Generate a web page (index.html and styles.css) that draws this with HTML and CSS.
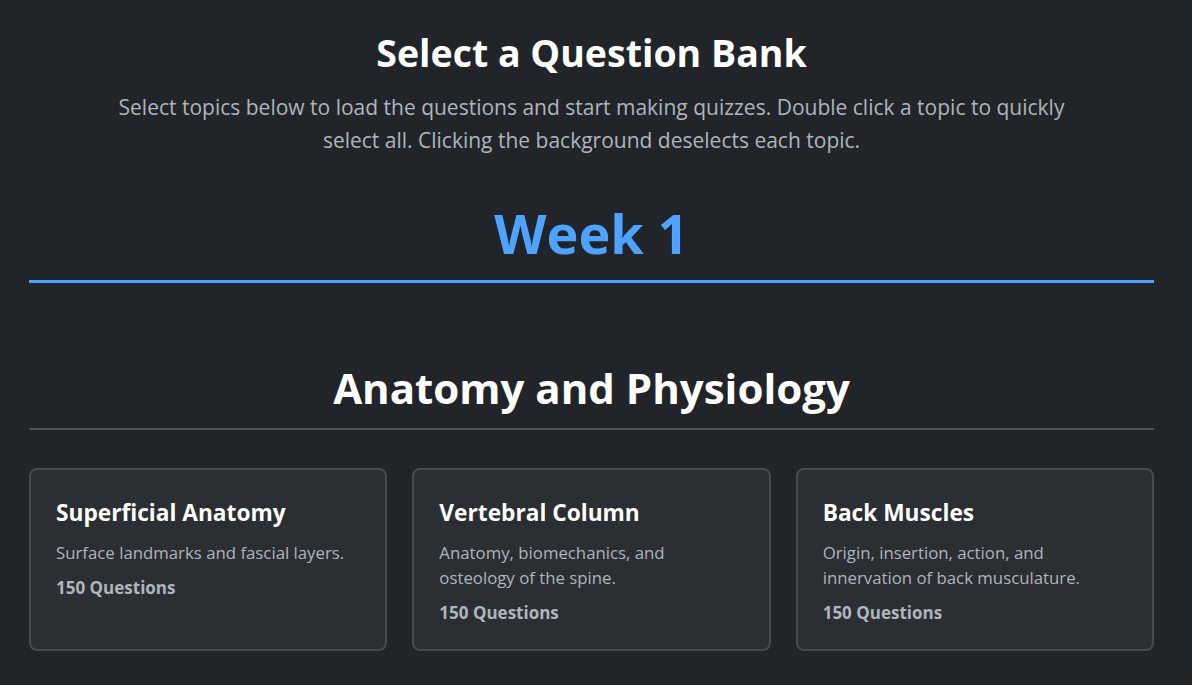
FILE: index.html
```html
<!DOCTYPE html>
<html lang="en">
<head>
<meta charset="utf-8">
<title>Select a Question Bank</title>
<link rel="stylesheet" href="styles.css">
</head>
<body>
<main class="page">
  <header class="intro">
    <h1 class="intro-title">Select a Question Bank</h1>
    <p class="intro-text">Select topics below to load the questions and start making quizzes. Double click a topic to quickly select all. Clicking the background deselects each topic.</p>
  </header>

  <section class="week">
    <h2 class="week-title">Week 1</h2>

    <div class="subject">
      <h3 class="subject-title">Anatomy and Physiology</h3>
      <div class="topic-grid">
        <div class="topic-card">
          <h4 class="topic-name">Superficial Anatomy</h4>
          <p class="topic-desc">Surface landmarks and fascial layers.</p>
          <p class="topic-count">150 Questions</p>
        </div>
        <div class="topic-card">
          <h4 class="topic-name">Vertebral Column</h4>
          <p class="topic-desc">Anatomy, biomechanics, and osteology of the spine.</p>
          <p class="topic-count">150 Questions</p>
        </div>
        <div class="topic-card">
          <h4 class="topic-name">Back Muscles</h4>
          <p class="topic-desc">Origin, insertion, action, and innervation of back musculature.</p>
          <p class="topic-count">150 Questions</p>
        </div>
      </div>
    </div>
  </section>
</main>
</body>
</html>
```

FILE: styles.css
```css
html, body {
  margin: 0;
  padding: 0;
  background: #212529;
}

body {
  font-family: "Open Sans", "Noto Sans", sans-serif;
  color: #f8f9fa;
}

.page {
  padding: 30px 38px 0 29px;
}

.intro {
  text-align: center;
}

.intro-title {
  margin: 0;
  font-size: 37.5px;
  font-weight: 700;
  line-height: 1.2;
  color: #ffffff;
}

.intro-text {
  margin: 16px auto 0;
  max-width: 955px;
  font-size: 21px;
  line-height: 33px;
  color: #adb5bd;
}

.week {
  margin-top: 44px;
}

.week-title {
  margin: 0;
  text-align: center;
  font-size: 54px;
  font-weight: 700;
  line-height: 1.2;
  color: #4da3ff;
  padding-bottom: 14px;
  border-bottom: 3px solid #4da3ff;
}

.subject {
  margin-top: 80px;
}

.subject-title {
  margin: 0;
  text-align: center;
  font-size: 42px;
  font-weight: 700;
  line-height: 1.2;
  color: #ffffff;
  padding-bottom: 15px;
  border-bottom: 2px solid #4b5057;
}

.topic-grid {
  margin-top: 38px;
  display: grid;
  grid-template-columns: repeat(3, 1fr);
  gap: 25px;
}

.topic-card {
  background: #2b2e33;
  border: 2px solid #464b52;
  border-radius: 8px;
  padding: 28px 26px 24px 25px;
}

.topic-name {
  margin: 0;
  font-size: 22.7px;
  font-weight: 700;
  line-height: 1.3;
  color: #ffffff;
}

.topic-desc {
  margin: 12px 0 0;
  font-size: 16.8px;
  line-height: 25px;
  color: #adb5bd;
}

.topic-count {
  margin: 11px 0 0;
  font-size: 17px;
  font-weight: 700;
  line-height: 24px;
  color: #adb5bd;
}
```
